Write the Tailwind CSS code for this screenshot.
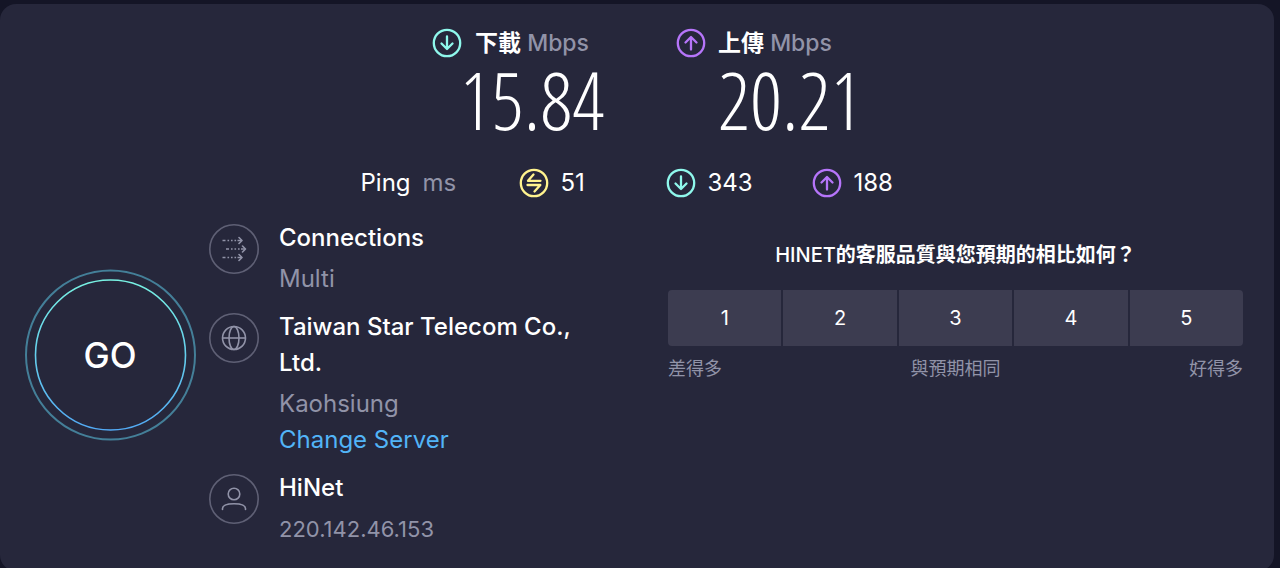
<!DOCTYPE html>
<html lang="zh-Hant">
<head>
    <meta charset="UTF-8">
    <meta name="viewport" content="width=device-width, initial-scale=1">
    <title>Speedtest</title>
    <script src="https://cdn.jsdelivr.net/npm/@tailwindcss/browser@4"></script>
</head>
<body class="bg-[#141526] font-['Inter','Noto_Sans_CJK_TC',sans-serif] text-2xl text-white">

<!-- Shared icons -->
<svg class="hidden">
    <symbol id="icon-down" viewBox="0 0 30 30" fill="none" stroke="currentColor" stroke-width="2.3">
        <circle cx="15" cy="15" r="13.2"/>
        <path d="M15 8.5v12M9.5 15.5l5.5 5.5 5.5-5.5" stroke-linecap="round" stroke-linejoin="round"/>
    </symbol>
    <symbol id="icon-up" viewBox="0 0 30 30" fill="none" stroke="currentColor" stroke-width="2.3">
        <circle cx="15" cy="15" r="13.2"/>
        <path d="M15 21.5v-12M9.5 14.5l5.5-5.5 5.5 5.5" stroke-linecap="round" stroke-linejoin="round"/>
    </symbol>
    <symbol id="icon-idle" viewBox="0 0 30 30" fill="none" stroke="currentColor" stroke-width="2.3">
        <circle cx="15" cy="15" r="13.2"/>
        <path d="M14.5 6.5L9 12.8h12.5M8.5 17h12.8L15.5 23.5" stroke-linecap="round" stroke-linejoin="round"/>
    </symbol>
</svg>

<main class="mr-1.5 mt-1 rounded-2xl bg-[#26273b] pt-5 pb-6">

    <!-- Results -->
    <section class="mr-2 flex justify-center gap-[86px]">
        <div class="flex gap-3">
            <svg class="mt-1 size-[30px] text-[#8ff8ec]"><use href="#icon-down"/></svg>
            <div class="flex w-[116px] flex-col items-center">
                <h2 class="whitespace-nowrap text-[23px] leading-[38px] font-medium text-[#9193a8]"><span class="font-bold text-white">下載</span> Mbps</h2>
                <p class="mb-2 font-['Open_Sans_Condensed_Light','Open_Sans_Condensed','Liberation_Sans_Narrow',sans-serif] text-[80px] leading-[74px] font-light">15.84</p>
            </div>
        </div>
        <div class="flex gap-3">
            <svg class="mt-1 size-[30px] text-[#b675fa]"><use href="#icon-up"/></svg>
            <div class="flex w-[116px] flex-col items-start">
                <h2 class="whitespace-nowrap text-[23px] leading-[38px] font-medium text-[#9193a8]"><span class="font-bold text-white">上傳</span> Mbps</h2>
                <p class="mb-2 font-['Open_Sans_Condensed_Light','Open_Sans_Condensed','Liberation_Sans_Narrow',sans-serif] text-[80px] leading-[74px] font-light">20.21</p>
            </div>
        </div>
    </section>

    <!-- Latency -->
    <section class="mr-4 mt-[21px] flex items-center justify-center leading-9">
        <div class="flex w-[158px] gap-3">Ping <span class="text-[#9193a8]">ms</span></div>
        <div class="flex w-[147px] items-center gap-3">
            <svg class="size-[30px] text-[#fff38e]"><use href="#icon-idle"/></svg>51
        </div>
        <div class="flex w-[146px] items-center gap-3">
            <svg class="size-[30px] text-[#8ff8ec]"><use href="#icon-down"/></svg>343
        </div>
        <div class="flex w-[86px] items-center gap-3">
            <svg class="size-[30px] text-[#b675fa]"><use href="#icon-up"/></svg>188
        </div>
    </section>

    <div class="mt-[19px] grid grid-cols-2">
        <div class="flex pr-8 pl-6">
            <button type="button" class="relative mt-[49px] size-[172px] shrink-0 cursor-pointer rounded-full text-[35px] font-medium">
                <svg class="absolute inset-0 size-full" viewBox="0 0 172 172" fill="none">
                    <defs>
                        <linearGradient id="ring" x1="0" y1="0" x2="0" y2="1">
                            <stop offset="0" stop-color="#78f2e3"/>
                            <stop offset="1" stop-color="#52aaf5"/>
                        </linearGradient>
                    </defs>
                    <circle cx="86.5" cy="86" r="84.5" stroke="#447f98" stroke-width="2"/>
                    <circle cx="86.5" cy="86" r="75" stroke="url(#ring)" stroke-width="1.6"/>
                </svg>
                GO
            </button>

            <ul class="ml-[13px] flex flex-col gap-3 leading-9">
                <li class="flex gap-5">
                    <svg class="mt-1 size-[50px] shrink-0" viewBox="0 0 50 50" fill="none" stroke="#9193a8" stroke-width="1.6">
                        <circle cx="25" cy="25" r="24.2" stroke="#5f6075"/>
                        <path d="M13.5 16.5h3M18.5 16.5h1.6M22 16.5h1.6M25.5 16.5h1.6M28.5 16.5h4M17 25h3M22 25h1.6M25.5 25h1.6M29 25h1.6M32 25h4M13.5 33.5h3M18.5 33.5h1.6M22 33.5h1.6M25.5 33.5h1.6M28.5 33.5h4"/>
                        <path d="M30 13.5l3 3-3 3M33.5 22l3 3-3 3M30 30.5l3 3-3 3" stroke-linecap="round" stroke-linejoin="round"/>
                    </svg>
                    <div>
                        <h3 class="font-medium">Connections</h3>
                        <p class="mt-[5px] text-[#9193a8]">Multi</p>
                    </div>
                </li>
                <li class="flex gap-5">
                    <svg class="mt-1 size-[50px] shrink-0" viewBox="0 0 50 50" fill="none" stroke="#9193a8" stroke-width="1.6">
                        <circle cx="25" cy="25" r="24.2" stroke="#5f6075"/>
                        <circle cx="25" cy="25" r="11.5"/>
                        <ellipse cx="25" cy="25" rx="5" ry="11.5"/>
                        <path d="M13.5 25h23"/>
                    </svg>
                    <div>
                        <h3 class="font-medium">Taiwan Star Telecom Co., Ltd.</h3>
                        <p class="mt-[5px] text-[#9193a8]">Kaohsiung</p>
                        <a href="#" class="block text-[#52b4f7]">Change Server</a>
                    </div>
                </li>
                <li class="flex gap-5">
                    <svg class="mt-1 size-[50px] shrink-0" viewBox="0 0 50 50" fill="none" stroke="#9193a8" stroke-width="1.6">
                        <circle cx="25" cy="25" r="24.2" stroke="#5f6075"/>
                        <circle cx="25" cy="20" r="5.8"/>
                        <path d="M13.5 35.5v-1c0-3 4-4.8 11.5-4.8s11.5 1.8 11.5 4.8v1" stroke-linecap="round"/>
                    </svg>
                    <div>
                        <h3 class="font-medium">HiNet</h3>
                        <p class="mt-[5px] text-[22px] text-[#9193a8]">220.142.46.153</p>
                    </div>
                </li>
            </ul>
        </div>

        <!-- Survey -->
        <section class="px-[31px] pt-[21px]">
            <h2 class="text-center text-xl leading-7 font-semibold"><span class="font-medium">HINET</span>的客服品質與您預期的相比如何？</h2>
            <div class="mt-[21px] grid grid-cols-5 gap-0.5 overflow-hidden rounded text-xl">
                <button type="button" class="h-14 cursor-pointer bg-[#3c3c50]">1</button>
                <button type="button" class="h-14 cursor-pointer bg-[#3c3c50]">2</button>
                <button type="button" class="h-14 cursor-pointer bg-[#3c3c50]">3</button>
                <button type="button" class="h-14 cursor-pointer bg-[#3c3c50]">4</button>
                <button type="button" class="h-14 cursor-pointer bg-[#3c3c50]">5</button>
            </div>
            <div class="mt-[9px] flex justify-between text-lg leading-7 text-[#9193a8]">
                <span>差得多</span>
                <span>與預期相同</span>
                <span>好得多</span>
            </div>
        </section>
    </div>
</main>

</body>
</html>
